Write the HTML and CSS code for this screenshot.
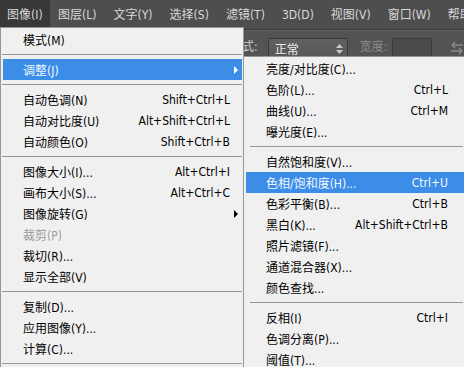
FILE: index.html
```html
<!DOCTYPE html>
<html lang="zh-CN">
<head>
    <meta charset="UTF-8">
    <title>图像 - 调整</title>
    <link rel="stylesheet" href="styles.css">
</head>
<body>
    <div class="menubar">
        <span class="top-item active">图像(I)</span>
        <span class="top-item">图层(L)</span>
        <span class="top-item">文字(Y)</span>
        <span class="top-item">选择(S)</span>
        <span class="top-item">滤镜(T)</span>
        <span class="top-item">3D(D)</span>
        <span class="top-item">视图(V)</span>
        <span class="top-item">窗口(W)</span>
        <span class="top-item">帮助</span>
    </div>

    <div class="options">
        <span class="opt-label">样式:</span>
        <div class="select">
            <span>正常</span>
            <svg class="updown" width="7" height="10" viewBox="0 0 7 10">
                <path d="M3.5 0 L7 4 L0 4 Z M0 6 L7 6 L3.5 10 Z" fill="#c8c8c8"/>
            </svg>
        </div>
        <span class="opt-label dim">宽度:</span>
        <div class="field"></div>
        <svg class="swap" width="16" height="14" viewBox="0 0 16 14">
            <path d="M3 4 H14 M3 4 L6 1 M3 4 L6 7 M13 10 H2 M13 10 L10 7 M13 10 L10 13" stroke="#8a8a8a" stroke-width="1.5" fill="none"/>
        </svg>
    </div>

    <!-- 图像 menu -->
    <div class="menu main-menu">
        <div class="row"><span>模式(M)</span></div>
        <div class="sep"></div>
        <div class="row hot"><span>调整(J)</span><i class="arrow"></i></div>
        <div class="sep"></div>
        <div class="row"><span>自动色调(N)</span><span class="key">Shift+Ctrl+L</span></div>
        <div class="row"><span>自动对比度(U)</span><span class="key">Alt+Shift+Ctrl+L</span></div>
        <div class="row"><span>自动颜色(O)</span><span class="key">Shift+Ctrl+B</span></div>
        <div class="sep"></div>
        <div class="row"><span>图像大小(I)...</span><span class="key">Alt+Ctrl+I</span></div>
        <div class="row"><span>画布大小(S)...</span><span class="key">Alt+Ctrl+C</span></div>
        <div class="row"><span>图像旋转(G)</span><i class="arrow"></i></div>
        <div class="row off"><span>裁剪(P)</span></div>
        <div class="row"><span>裁切(R)...</span></div>
        <div class="row"><span>显示全部(V)</span></div>
        <div class="sep"></div>
        <div class="row"><span>复制(D)...</span></div>
        <div class="row"><span>应用图像(Y)...</span></div>
        <div class="row"><span>计算(C)...</span></div>
        <div class="sep"></div>
    </div>

    <!-- 调整 submenu -->
    <div class="menu sub-menu">
        <div class="row"><span>亮度/对比度(C)...</span></div>
        <div class="row"><span>色阶(L)...</span><span class="key">Ctrl+L</span></div>
        <div class="row"><span>曲线(U)...</span><span class="key">Ctrl+M</span></div>
        <div class="row"><span>曝光度(E)...</span></div>
        <div class="sep"></div>
        <div class="row"><span>自然饱和度(V)...</span></div>
        <div class="row hot"><span>色相/饱和度(H)...</span><span class="key">Ctrl+U</span></div>
        <div class="row"><span>色彩平衡(B)...</span><span class="key">Ctrl+B</span></div>
        <div class="row"><span>黑白(K)...</span><span class="key">Alt+Shift+Ctrl+B</span></div>
        <div class="row"><span>照片滤镜(F)...</span></div>
        <div class="row"><span>通道混合器(X)...</span></div>
        <div class="row"><span>颜色查找...</span></div>
        <div class="sep"></div>
        <div class="row"><span>反相(I)</span><span class="key">Ctrl+I</span></div>
        <div class="row"><span>色调分离(P)...</span></div>
        <div class="row"><span>阈值(T)...</span></div>
    </div>
</body>
</html>
```

FILE: styles.css
```css
body {
    margin: 0;
    width: 464px;
    height: 367px;
    overflow: hidden;
    background: #535353;
    font-family: "DejaVu Sans Condensed", "Noto Sans CJK SC", sans-serif;
    font-size: 12px;
    position: relative;
}
.menubar {
    height: 29px;
    background: #4e4e4e;
    border-bottom: 1px solid #3c3c3c;
    display: flex;
    white-space: nowrap;
    overflow: hidden;
}
.top-item {
    flex-shrink: 0;
    padding: 6px 8.5px 0 8.5px;
    height: 21px;
    color: #d8d8d8;
    line-height: 18px;
}
.top-item.active {
    padding-left: 7px;
    padding-right: 7px;
    background: #383838;
}
.options {
    height: 30px;
    border-top: 1px solid #5e5e5e;
    display: flex;
    align-items: flex-start;
    padding: 7px 0 0 230px;
    box-sizing: border-box;
    color: #cfcfcf;
    white-space: nowrap;
}
.opt-label {
    flex-shrink: 0;
    line-height: 19px;
    margin-right: 10px;
}
.opt-label.dim {
    color: #8c8c8c;
    margin-left: 12px;
    margin-right: 5px;
}
.select {
    flex-shrink: 0;
    width: 68px;
    height: 19px;
    padding: 0 4px 0 6px;
    border: 1px solid #3a3a3a;
    border-radius: 2px;
    background: linear-gradient(#616161, #575757);
    color: #ececec;
    display: flex;
    align-items: center;
    justify-content: space-between;
}
.field {
    flex-shrink: 0;
    width: 38px;
    height: 19px;
    border: 1px solid #3c3c3c;
    background: #4a4a4a;
}
.swap {
    flex-shrink: 0;
    margin: 3px 0 0 17px;
}
.menu {
    position: absolute;
    background: #f0f0f0;
    border: 1px solid #979797;
    box-sizing: border-box;
    padding-top: 1px;
    color: #000;
}
.main-menu {
    left: 0;
    top: 27px;
    width: 244px;
    height: 340px;
    border-bottom: none;
}
.sub-menu {
    left: 243px;
    top: 56px;
    width: 221px;
    height: 311px;
    border-right: none;
    border-bottom: none;
}
.row {
    height: 21px;
    margin: 0 1px 0 2px;
    padding: 0 12px 0 20px;
    display: flex;
    align-items: center;
    justify-content: space-between;
    white-space: nowrap;
}
.sub-menu .row {
    padding-right: 16px;
    margin-right: 0;
}
.row.hot {
    background: #3b8de7;
    color: #f4f8ff;
}
.row.off {
    color: #9b9b9b;
}
.key {
    text-align: right;
}
.arrow {
    width: 0;
    height: 0;
    margin-right: -8px;
    border-top: 4px solid transparent;
    border-bottom: 4px solid transparent;
    border-left: 4px solid #000;
}
.row.hot .arrow {
    border-left-color: #fff;
}
.sep {
    height: 9px;
    margin: 0 1px;
    background: linear-gradient(#979797, #979797) 0 4px / 100% 1px no-repeat;
}
.sub-menu .sep {
    margin-left: 6px;
}
```
